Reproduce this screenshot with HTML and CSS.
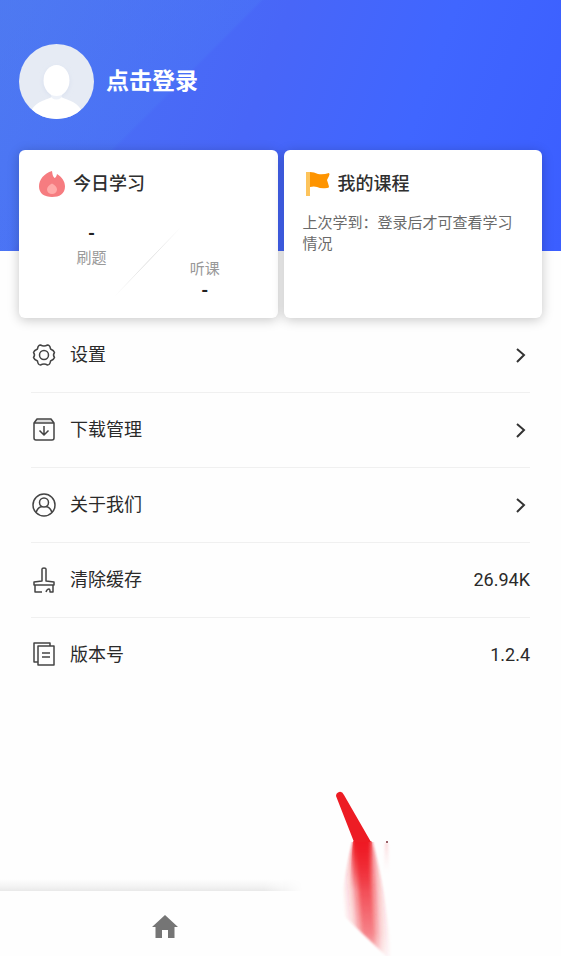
FILE: index.html
```html
<!DOCTYPE html>
<html lang="zh-CN">
<head>
<meta charset="utf-8">
<meta name="viewport" content="width=device-width, initial-scale=1">
<title>我的</title>
<link rel="stylesheet" href="styles.css">
</head>
<body>
<header class="hero">
  <a class="login" href="#login">
    <svg class="avatar" viewBox="0 0 75 75" aria-hidden="true">
      <defs>
        <clipPath id="face"><circle cx="37.500" cy="37.500" r="37.500"/></clipPath>
        <filter id="soft" x="-20%" y="-20%" width="140%" height="140%"><feGaussianBlur stdDeviation="2"/></filter>
      </defs>
      <g clip-path="url(#face)">
        <rect width="75" height="75" fill="#e6ebf4"/>
        <ellipse cx="37.500" cy="38" rx="13.500" ry="15.500" fill="#dae1ef" filter="url(#soft)"/>
        <path d="M12 68C16 57 28 56 33 53H42C47 56 59 57 63 68L55 80H20Z" fill="#fff"/>
        <path d="M31 49Q37 54 44 49L42 54Q37 57 33 54Z" fill="#eef2f9"/>
        <ellipse cx="37.500" cy="36.500" rx="13" ry="15.500" fill="#fff"/>
      </g>
    </svg>
    <span>点击登录</span>
  </a>
</header>
<main>
  <div class="cards">
    <section class="card">
      <h2>
        <svg class="card-icon" viewBox="0 0 28 28" aria-hidden="true">
          <path d="M14 1C14.500 4 14.500 6 16.500 8C18 7.500 18.500 6 19 4C24 7 27 11.500 27 16.500C27 24 21.500 27 14 27S1 23.500 1 16.500C1 9.500 6 3.500 14 1Z" fill="#f67c80"/>
          <path d="M14 13.500C17 15 19 17 19 19.500A5 4.500 0 0 1 9 19.500C9 17 11 15 14 13.500Z" fill="#ffaaa9"/>
        </svg>
        今日学习
      </h2>
      <div class="stats">
        <div class="stat"><strong>-</strong><span>刷题</span></div>
        <svg class="slash" viewBox="0 0 70 76" aria-hidden="true">
          <defs><linearGradient id="fade" x1="0" y1="1" x2="1" y2="0"><stop offset="0" stop-color="#fff"/><stop offset=".5" stop-color="#dedede"/><stop offset="1" stop-color="#fff"/></linearGradient></defs>
          <path d="M2 74L68 5" stroke="url(#fade)" fill="none"/>
        </svg>
        <div class="stat stat-low"><span>听课</span><strong>-</strong></div>
      </div>
    </section>
    <section class="card">
      <h2>
        <svg class="card-icon" viewBox="0 0 28 28" aria-hidden="true">
          <path d="M3 2H7V26H3Z" fill="#fdc45c"/>
          <path d="M7 2Q11 2 15 4Q20 5 26 3Q27 4 26 6L24 10Q25 13 26 16.500Q26 18 24 18Q18 19 14 17Q11 16 7 17Z" fill="#fe9400"/>
        </svg>
        我的课程
      </h2>
      <p>上次学到：登录后才可查看学习情况</p>
    </section>
  </div>
  <ul class="menu">
    <li><a class="row" href="#settings">
      <svg class="icon" viewBox="0 0 24 24" aria-hidden="true"><path d="M8.500 2Q12 4 15.500 2Q18 2 18.500 6Q22 7.500 22.500 9.500Q20.500 12 22.500 14.500Q22 16.500 18.500 18Q18 22 15.500 22Q12 20 8.500 22Q6 22 5.500 18Q2 16.500 1.500 14.500Q3.500 12 1.500 9.500Q2 7.500 5.500 6Q6 2 8.500 2Z"/><circle cx="12" cy="12" r="4.500"/></svg>
      <span>设置</span>
      <svg class="chevron" viewBox="0 0 10 16" aria-hidden="true"><path d="M1 2L8 8L1 15"/></svg>
    </a></li>
    <li><a class="row" href="#downloads">
      <svg class="icon" viewBox="0 0 24 24" aria-hidden="true"><path d="M5 1.500H19L21 4.500H3Z" class="lid"/><path d="M2 5L5 1H19L22 5V20Q22 22 20 22H4Q2 22 2 20ZM2 5H22M12 8V17M7.500 12.500L12 17L16.500 12.500"/></svg>
      <span>下载管理</span>
      <svg class="chevron" viewBox="0 0 10 16" aria-hidden="true"><path d="M1 2L8 8L1 15"/></svg>
    </a></li>
    <li><a class="row" href="#about">
      <svg class="icon" viewBox="0 0 24 24" aria-hidden="true"><circle cx="12" cy="12" r="11"/><circle cx="12" cy="9.500" r="4.500"/><path d="M4 19.500Q6 14 10 13.500M14 13.500Q18 14 20 19.500"/></svg>
      <span>关于我们</span>
      <svg class="chevron" viewBox="0 0 10 16" aria-hidden="true"><path d="M1 2L8 8L1 15"/></svg>
    </a></li>
    <li><button class="row" type="button">
      <svg class="icon" viewBox="0 0 24 24" aria-hidden="true"><path d="M10 13V1Q10 0 12 0T14 1V13L22 14V17H2V14ZM3 17V24H10M14 24Q15 21 17 21Q18 21 18 24H21V17"/></svg>
      <span>清除缓存</span>
      <span class="value">26.94K</span>
    </button></li>
    <li><div class="row">
      <svg class="icon" viewBox="0 0 24 24" aria-hidden="true"><path d="M6 19H2V0H18V3M6 3H22V22H6ZM10 10H18M10 14H18"/></svg>
      <span>版本号</span>
      <span class="value">1.2.4</span>
    </div></li>
  </ul>
</main>
<nav class="tabs">
  <a href="#home" aria-label="首页"><svg viewBox="0 0 28 26" aria-hidden="true"><path d="M14 2L27 14H23.500V25H17V17H11V25H4.500V14H1Z"/></svg></a>
</nav>
<svg class="pointer" viewBox="0 0 60 166" aria-hidden="true">
  <defs>
    <linearGradient id="red" gradientUnits="userSpaceOnUse" x1="3" y1="52" x2="48" y2="49"><stop offset="0" stop-color="#f01c26" stop-opacity="0"/><stop offset=".2" stop-color="#f01c26" stop-opacity=".25"/><stop offset=".42" stop-color="#ef1822" stop-opacity=".9"/><stop offset=".6" stop-color="#ef1822" stop-opacity=".9"/><stop offset=".8" stop-color="#f01c26" stop-opacity=".3"/><stop offset="1" stop-color="#f01c26" stop-opacity="0"/></linearGradient>
    <linearGradient id="core"><stop offset="0" stop-color="#ee1822" stop-opacity="0"/><stop offset=".25" stop-color="#ee1822"/><stop offset=".75" stop-color="#ee1822"/><stop offset="1" stop-color="#ee1822" stop-opacity="0"/></linearGradient>
    <linearGradient id="down" x1="0" y1="0" x2="0" y2="1"><stop offset="0" stop-color="#fff"/><stop offset=".4" stop-color="#ddd"/><stop offset=".8" stop-color="#999"/><stop offset="1" stop-color="#444"/></linearGradient>
    <linearGradient id="short" x1="0" y1="0" x2="0" y2="1"><stop offset="0" stop-color="#fff"/><stop offset="1" stop-color="#000"/></linearGradient>
    <linearGradient id="pink" x1="0" y1="0" x2="0" y2="1"><stop stop-color="#f7a5aa"/><stop offset="1" stop-color="#fff" stop-opacity="0"/></linearGradient>
    <mask id="tail"><rect y="52" width="60" height="114" fill="url(#down)"/></mask>
    <mask id="fall"><rect y="50" width="60" height="50" fill="url(#short)"/></mask>
    <filter id="edge" x="-20%" y="-10%" width="140%" height="120%"><feGaussianBlur stdDeviation="1"/></filter>
  </defs>
  <g mask="url(#tail)"><path d="M17 50H36Q43 75 48 105L58 174L50 166L4 122Q9 80 17 50Z" fill="url(#red)" filter="url(#edge)"/></g>
  <path d="M17 51H36L38 100H13Z" fill="url(#core)" mask="url(#fall)"/>
  <path d="M0 6Q0 3 3 2Q6 1 8 5L35 52H18Z" fill="#ed1c24"/>
  <path d="M49 53H52L54 87H47Z" fill="url(#pink)" opacity=".4" filter="url(#edge)"/>
  <circle cx="51" cy="52" r="1" fill="#7b3037"/>
</svg>
</body>
</html>
```

FILE: styles.css
```css
* {
  box-sizing: border-box;
}

body {
  position: relative;
  display: flex;
  flex-direction: column;
  min-height: 100vh;
  margin: 0;
  overflow-x: hidden;
  background: #fefefe;
  color: #2a2a2a;
  font-family: Roboto, "Noto Sans CJK SC", sans-serif;
  font-size: 18px;
  line-height: 24px;
}

a {
  color: inherit;
  text-decoration: none;
}

.hero {
  padding: 44px 19px 132px;
  background:
    linear-gradient(135deg, rgb(80 128 240 / 45%) 0, rgb(76 126 246 / 30%) 184px, transparent 187px),
    linear-gradient(110deg, #4c74f2 0%, #4866f8 45%, #4066ff 70%, #3b5eff 100%);
}

.login {
  display: flex;
  align-items: center;
  gap: 12px;
  width: max-content;
  color: #fff;
  font-size: 23px;
  font-weight: 700;
}

.avatar {
  width: 75px;
  height: 75px;
}

.cards {
  display: grid;
  grid-template-columns: 1fr 1fr;
  gap: 6px;
  margin-top: -101px;
  padding: 0 19px;
}

.card {
  min-height: 168px;
  padding: 20px 19px 16px;
  border-radius: 6px;
  background: #fff;
  box-shadow: 0 2px 12px rgb(0 0 0 / 22%);
}

.card h2 {
  display: flex;
  align-items: center;
  gap: 7px;
  height: 28px;
  margin: 0;
  color: #2f2f2f;
  font-size: 18px;
  font-weight: 500;
}

.card-icon {
  width: 28px;
  height: 28px;
}

.card p {
  margin: 15px 0 0;
  color: #6a6a6a;
  font-size: 15px;
  line-height: 21px;
}

.stats {
  display: grid;
  grid-template-columns: 1fr 70px 1fr;
  margin-top: 24px;
  color: #999;
  font-size: 15px;
}

.stat {
  display: flex;
  flex-direction: column;
  align-items: center;
  margin-left: 32px;
}

.stat-low {
  margin: 36px 32px 0 0;
  line-height: 22px;
}

.stat strong {
  color: #222;
  font-size: 18px;
}

.slash {
  width: 70px;
  height: 76px;
}

.menu {
  margin: 0;
  padding: 0 31px;
  list-style: none;
}

.menu li + li {
  border-top: 1px solid #f0f0f0;
}

.row {
  display: flex;
  align-items: center;
  gap: 14px;
  width: 100%;
  height: 74px;
  padding: 0 0 0 1px;
  border: 0;
  background: none;
  color: inherit;
  font: inherit;
  text-align: left;
}

.icon {
  width: 24px;
  height: 24px;
  overflow: visible;
  fill: none;
  stroke: #444;
  stroke-width: 1.5;
  stroke-linejoin: round;
}

.icon .lid {
  fill: #ddd;
  stroke: none;
}

.chevron {
  width: 10px;
  height: 16px;
  margin: 0 4px 0 auto;
  fill: none;
  stroke: #333;
  stroke-width: 2;
}

.value {
  margin-left: auto;
}

.tabs {
  display: grid;
  grid-template-columns: 1fr 1fr;
  height: 65px;
  margin-top: auto;
  padding: 0 25px;
  background: #fefefe;
}

.tabs::before {
  content: "";
  grid-area: 1 / 1 / 2 / 3;
  height: 12px;
  margin: -12px -25px 0;
  background: linear-gradient(to top, #e9e9e9, #f4f4f4 40%, #fefefe);
  -webkit-mask-image: linear-gradient(to right, #000 47%, transparent 54%);
  mask-image: linear-gradient(to right, #000 47%, transparent 54%);
}

.tabs a {
  display: flex;
  grid-area: 1 / 1;
  align-items: center;
  justify-content: center;
  padding: 5px 0 0 24px;
}

.tabs svg {
  width: 28px;
  height: 26px;
  fill: #757575;
}

.pointer {
  position: absolute;
  bottom: 0;
  left: calc(50% + 55px);
  width: 60px;
  height: 166px;
  pointer-events: none;
}
```
